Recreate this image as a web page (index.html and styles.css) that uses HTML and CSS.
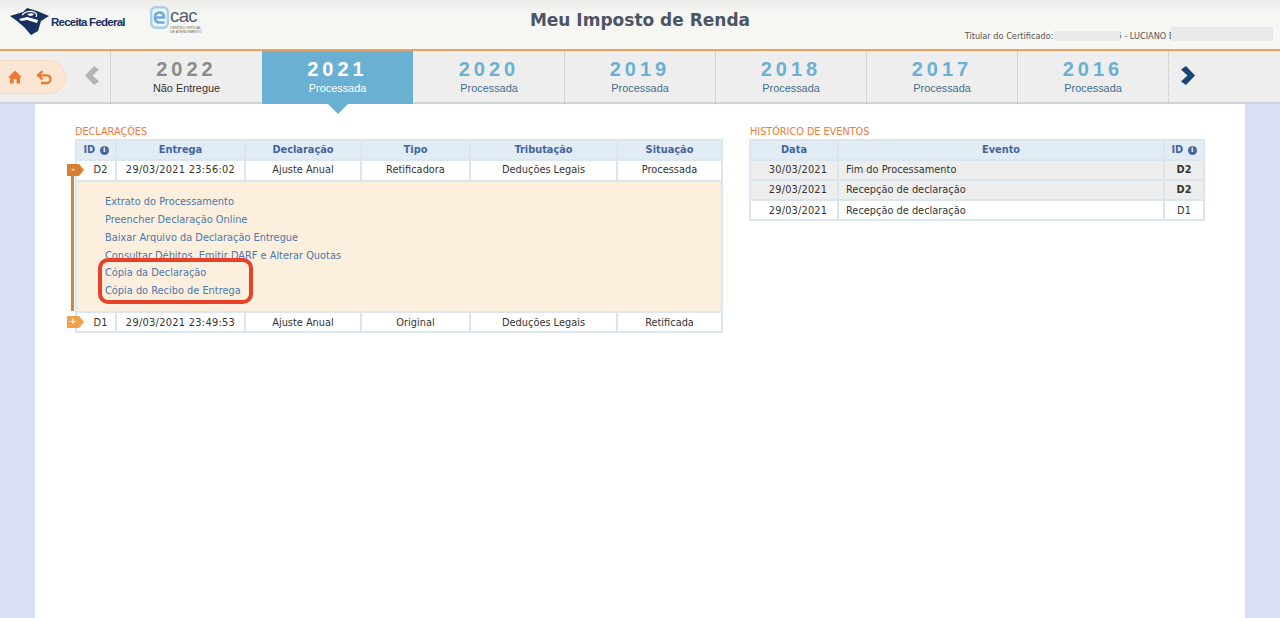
FILE: index.html
```html
<!DOCTYPE html>
<html lang="pt-BR">
<head>
<meta charset="utf-8">
<title>Meu Imposto de Renda</title>
<link rel="stylesheet" href="styles.css">
</head>
<body>
<header class="top">
  <div class="logos">
    <div class="rf">
      <svg class="rf-mark" width="40" height="28" viewBox="0 0 40 28">
        <path fill="#16305f" d="M0 8 L13 4 L17 0 L27 3 L39 8 L31 13 L28 23 L21 27 L14 19 L7 13 Z"/>
        <path fill="none" stroke="#fff" stroke-width="1.3" d="M12 7 Q17 2 24 4 Q28 6 26 9"/>
        <path fill="#fff" d="M17 6.5 Q21 4.5 24 6 Q23 8 20 8 Z"/>
        <path fill="#fff" d="M9 11 L17 9 L28 12 L27 15 L17 12 L11 13 Z"/>
      </svg>
      <span class="rf-name">Receita Federal</span>
    </div>
    <div class="ecac">
      <svg width="19" height="23" viewBox="0 0 19 23">
        <rect x="1.2" y="1.2" width="16.6" height="20.6" rx="4.5" fill="#eef5fb" stroke="#a9cdea" stroke-width="2.4"/>
        <path fill="none" stroke="#6fa9d8" stroke-width="2.6" d="M5 11.5 H14 Q14 6.5 9.5 6.5 Q5 6.5 5 11.5 Q5 16.5 9.5 16.5 H14.5"/>
      </svg>
      <div class="ecac-text">
        <span class="ecac-name">cac</span>
        <span class="ecac-sub">CENTRO VIRTUAL<br>DE ATENDIMENTO</span>
      </div>
    </div>
  </div>
  <h1 class="title">Meu Imposto de Renda</h1>
  <div class="cert">
    <span class="cert-text">Titular do Certificado:</span>
    <span class="mask mask-a"></span>
    <span class="cert-text">5 - LUCIANO E</span>
    <span class="mask mask-b"></span>
  </div>
</header>

<nav class="years">
  <div class="actions">
    <svg width="14" height="14" viewBox="0 0 14 14"><path fill="#ec7a35" d="M7 .5 L14 7.5 H12 V13.5 H8.5 V9 H5.5 V13.5 H2 V7.5 H0 Z"/></svg>
    <svg width="16" height="15" viewBox="0 0 16 15"><path fill="none" stroke="#ec7a35" stroke-width="2.3" d="M6.5 1 L2 5.3 L6.5 9.5 M3 5.3 H10.5 Q14.5 5.3 14.5 9 Q14.5 13 10.5 13 H5"/></svg>
  </div>
  <div class="arrow-cell">
    <svg width="14" height="19" viewBox="0 0 14 19"><path fill="#b5b5b5" d="M9 0 L14 3.5 L7.5 9.5 L14 15.5 L9 19 L0 9.5 Z"/></svg>
  </div>
  <a class="tab tab-none"><strong>2022</strong><span>Não Entregue</span></a>
  <a class="tab tab-active"><strong>2021</strong><span>Processada</span></a>
  <a class="tab"><strong>2020</strong><span>Processada</span></a>
  <a class="tab"><strong>2019</strong><span>Processada</span></a>
  <a class="tab"><strong>2018</strong><span>Processada</span></a>
  <a class="tab"><strong>2017</strong><span>Processada</span></a>
  <a class="tab"><strong>2016</strong><span>Processada</span></a>
  <div class="arrow-cell arrow-next">
    <svg width="14" height="19" viewBox="0 0 14 19"><path fill="#1d4477" d="M5 0 L0 3.5 L6.5 9.5 L0 15.5 L5 19 L14 9.5 Z"/></svg>
  </div>
</nav>

<main class="page">
  <section class="panel panel-left">
    <h2 class="panel-title">DECLARAÇÕES</h2>
    <table class="grid grid-dec">
      <colgroup><col class="c-id"><col class="c-ent"><col class="c-dec"><col class="c-tipo"><col class="c-trib"><col class="c-sit"></colgroup>
      <thead>
        <tr><th>ID <i class="info">i</i></th><th>Entrega</th><th>Declaração</th><th>Tipo</th><th>Tributação</th><th>Situação</th></tr>
      </thead>
      <tbody>
        <tr>
          <td class="id-cell"><span class="flag flag-open">-</span>D2</td>
          <td class="date">29/03/2021 23:56:02</td><td>Ajuste Anual</td><td>Retificadora</td><td>Deduções Legais</td><td>Processada</td>
        </tr>
        <tr class="detail">
          <td colspan="6" class="detail-cell">
            <span class="rail"></span>
            <ul class="links">
              <li><a>Extrato do Processamento</a></li>
              <li><a>Preencher Declaração Online</a></li>
              <li><a>Baixar Arquivo da Declaração Entregue</a></li>
              <li><a>Consultar Débitos, Emitir DARF e Alterar Quotas</a></li>
              <li><a>Cópia da Declaração</a></li>
              <li><a>Cópia do Recibo de Entrega</a></li>
            </ul>
            <span class="highlight"></span>
          </td>
        </tr>
        <tr class="last-row">
          <td class="id-cell"><span class="flag flag-closed">+</span>D1</td>
          <td class="date">29/03/2021 23:49:53</td><td>Ajuste Anual</td><td>Original</td><td>Deduções Legais</td><td>Retificada</td>
        </tr>
      </tbody>
    </table>
  </section>
  <section class="panel panel-right">
    <h2 class="panel-title">HISTÓRICO DE EVENTOS</h2>
    <table class="grid grid-hist">
      <colgroup><col class="c-data"><col><col class="c-hid"></colgroup>
      <thead>
        <tr><th>Data</th><th>Evento</th><th>ID <i class="info">i</i></th></tr>
      </thead>
      <tbody>
        <tr class="shade row-b"><td class="date date-short">30/03/2021</td><td class="left">Fim do Processamento</td><td><b>D2</b></td></tr>
        <tr class="shade row-b"><td class="date date-short">29/03/2021</td><td class="left">Recepção de declaração</td><td><b>D2</b></td></tr>
        <tr class="last-row"><td class="date date-short">29/03/2021</td><td class="left">Recepção de declaração</td><td>D1</td></tr>
      </tbody>
    </table>
  </section>
</main>
</body>
</html>
```
FILE: styles.css
```css
* { box-sizing: border-box; }
html, body { margin: 0; height: 100%; }
body {
  background: #d9e0f6;
  font-family: "DejaVu Sans", Verdana, sans-serif;
  color: #333;
  overflow: hidden;
  display: flex;
  flex-direction: column;
}
.top {
  height: 51px;
  flex: none;
  background: linear-gradient(#ececea, #f6f6f2 30%, #f7f7f3);
  border-bottom: 2px solid #e9a260;
  position: relative;
  display: flex;
  align-items: flex-start;
}
.logos { display: flex; align-items: flex-start; padding: 8px 0 0 10px; }
.rf { display: flex; align-items: center; width: 140px; height: 28px; }
.rf-mark { flex: none; }
.rf-name {
  font-family: "Liberation Sans", Arial, sans-serif;
  font-weight: bold;
  font-size: 11.5px;
  letter-spacing: -0.75px;
  color: #16305f;
  margin-left: 1px;
  white-space: nowrap;
}
.ecac { display: flex; gap: 1px; margin-top: -2px; }
.ecac-text { display: flex; flex-direction: column; margin-top: 3px; }
.ecac-name {
  font-family: "Liberation Sans", Arial, sans-serif;
  font-size: 18.5px;
  line-height: 14px;
  letter-spacing: -0.6px;
  color: #56606e;
}
.ecac-sub {
  font-family: "Liberation Sans", Arial, sans-serif;
  font-size: 3.6px;
  line-height: 4px;
  color: #666;
  margin-top: 3px;
  white-space: nowrap;
}
.title {
  position: absolute;
  left: 0;
  right: 0;
  top: 10px;
  margin: 0;
  text-align: center;
  font-size: 17px;
  line-height: 20px;
  font-weight: bold;
  color: #4c5563;
}
.cert {
  position: absolute;
  right: 7px;
  top: 27px;
  display: flex;
  align-items: center;
  height: 14px;
  font-size: 8.2px;
  color: #555;
  white-space: nowrap;
}
.cert-text { margin-top: 4px; }
.mask { background: #e9e9e9; display: block; position: relative; }
.mask-a { width: 66px; height: 10px; margin: 4px -4px 0 1px; }
.mask-b { width: 102px; height: 14px; margin-left: -3px; }

.years {
  height: 53px;
  flex: none;
  background: #eeeeee;
  border-bottom: 2px solid #cdd4de;
  display: flex;
  position: relative;
  z-index: 1;
}
.actions {
  position: absolute;
  left: -20px;
  top: 9px;
  width: 86px;
  height: 34px;
  border-radius: 17px;
  background: #fbe6d3;
  border: 1px solid #f6dcc5;
  display: flex;
  align-items: center;
  gap: 14px;
  padding-left: 27px;
}
.arrow-cell {
  width: 110px;
  flex: none;
  display: flex;
  align-items: center;
  justify-content: flex-end;
  padding-right: 11px;
  padding-bottom: 3px;
}
.arrow-next {
  border-left: 1px dotted #bbb;
  justify-content: flex-start;
  width: auto;
  padding-left: 12px;
  padding-right: 0;
}
.tab {
  width: 151px;
  flex: none;
  height: 53px;
  text-align: center;
  border-left: 1px dotted #bbb;
  font-family: "Liberation Sans", Arial, sans-serif;
  display: flex;
  flex-direction: column;
  align-items: center;
  padding-top: 6px;
  color: #3f6f8f;
  position: relative;
}
.tab strong {
  font-size: 20px;
  line-height: 24px;
  letter-spacing: 4px;
  color: #69b0d3;
}
.tab span { font-size: 10.9px; line-height: 15px; }
.tab-none { width: 152px; color: #333; }
.tab-none strong { color: #8b8b8b; }
.tab-active { background: #6ab0d2; color: #fff; border-left: none; }
.tab-active strong { color: #fff; }
.tab-active + .tab { border-left-color: transparent; }
.tab-active::after {
  content: "";
  position: absolute;
  left: 50%;
  bottom: -10px;
  margin-left: -10px;
  border-left: 10px solid transparent;
  border-right: 10px solid transparent;
  border-top: 10px solid #6ab0d2;
}

.page {
  flex: 1;
  margin: 0 35px;
  background: #fff;
  display: flex;
  padding: 20px 40px 0 40px;
  align-items: flex-start;
}
.panel-left { width: 648px; margin-right: 26px; }
.panel-right { width: 456px; }
.panel-right .panel-title { padding-left: 1px; }
.panel-title {
  margin: 0;
  height: 15px;
  font-family: "DejaVu Sans", Verdana, sans-serif;
  font-weight: normal;
  font-size: 9.7px;
  line-height: 15px;
  color: #ec7a35;
}
.grid {
  width: 100%;
  border-collapse: collapse;
  table-layout: fixed;
  font-size: 9.8px;
  border: 2px solid #dbe7f0;
}
.grid th, .grid td { border: 2px solid #dbe7f0; padding: 0 0 2px; text-align: center; white-space: nowrap; }
.grid th {
  height: 20px;
  padding-bottom: 0;
  line-height: 12px;
  background: #e1ecf4;
  color: #45659f;
  font-size: 9.8px;
  font-weight: bold;
}
.grid td { height: 21px; color: #333; }
.grid .row-b td { height: 20px; }
.grid .last-row td { height: 20px; padding-bottom: 0; }
.grid td.left { text-align: left; padding-left: 7px; }
.date { letter-spacing: 0.3px; }
.grid td.date-short { padding-left: 8px; letter-spacing: 0.2px; }
.shade td { background: #eeeeee; }
.info {
  display: inline-block;
  width: 9px;
  height: 9px;
  line-height: 9px;
  margin-left: 1px;
  border-radius: 50%;
  background: #45659f;
  color: #fff;
  font-size: 7px;
  font-style: normal;
  font-weight: bold;
  text-align: center;
  vertical-align: 1px;
}
.c-id { width: 40px; }
.c-ent { width: 129px; }
.c-dec { width: 116px; }
.c-tipo { width: 109px; }
.c-trib { width: 147px; }
.c-data { width: 88px; }
.c-hid { width: 40px; }

.grid td.id-cell { position: relative; padding-left: 9px; }
.flag {
  position: absolute;
  left: -10px;
  top: 3px;
  width: 12px;
  height: 12px;
  color: #fff;
  font-size: 9px;
  font-weight: bold;
  line-height: 11px;
  text-align: center;
}
.flag::after {
  content: "";
  position: absolute;
  left: 12px;
  top: 0;
  border-left: 5px solid #000;
  border-top: 6px solid transparent;
  border-bottom: 6px solid transparent;
}
.flag-open { background: #d6812f; }
.flag-open::after { border-left-color: #d6812f; }
.flag-closed { background: #eda24b; }
.flag-closed::after { border-left-color: #eda24b; }

.grid td.detail-cell {
  height: 131px;
  background: #fcefdd;
  text-align: left;
  position: relative;
  padding: 0;
}
.rail {
  position: absolute;
  left: -6px;
  top: -7px;
  bottom: 0;
  width: 3px;
  background: #d6843a;
}
.links {
  list-style: none;
  margin: 0;
  padding: 0 0 0 28px;
}
.links li { height: 17.8px; line-height: 18px; }
.links a { color: #4a78ad; font-size: 9.8px; }
.highlight {
  position: absolute;
  left: 21px;
  top: 76px;
  width: 155px;
  height: 46px;
  border: 4px solid #e8412a;
  border-radius: 10px;
}
```
